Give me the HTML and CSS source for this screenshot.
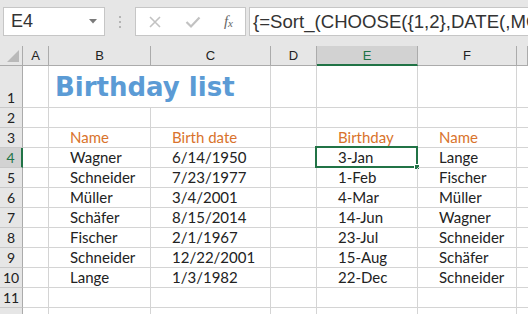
FILE: index.html
```html
<!DOCTYPE html>
<html lang="en">
<head>
  <meta charset="UTF-8">
  <title>Birthday list</title>
  <link rel="stylesheet" href="styles.css">
</head>
<body>

  <!-- Name box + formula bar -->
  <div class="toolbar">
    <div class="name-box">
      <span>E4</span>
      <svg class="drop" width="8" height="5" viewBox="0 0 8 5"><path d="M0 0H8L4 4.5Z" fill="#7a7a7a"/></svg>
    </div>
    <div class="grip"><i></i><i></i><i></i></div>
    <div class="fx-box">
      <svg width="14" height="14" viewBox="0 0 14 14"><path d="M2 2L12 12M12 2L2 12" stroke="#c2c2c2" stroke-width="1.6" fill="none"/></svg>
      <svg width="16" height="14" viewBox="0 0 16 14"><path d="M1.5 7L6 11.5L14.5 2.5" stroke="#c2c2c2" stroke-width="2.2" fill="none"/></svg>
      <span class="fx">f<sub>x</sub></span>
    </div>
    <div class="formula">{=Sort_(CHOOSE({1,2},DATE(,MONTH(C4:C10),DAY(C4:C10)),B4:B10),1)}</div>
  </div>

  <!-- Worksheet -->
  <div class="sheet">
    <div class="row head">
      <div class="corner"><span class="tri"></span></div>
      <div class="col">A</div><div class="col">B</div><div class="col">C</div><div class="col">D</div>
      <div class="col active">E</div><div class="col">F</div><div class="col"></div>
    </div>
    <div class="row tall">
      <div class="num">1</div><div class="c"></div>
      <div class="c span2 title">Birthday list</div>
      <div class="c"></div><div class="c"></div><div class="c"></div><div class="c"></div>
    </div>
    <div class="row">
      <div class="num">2</div><div class="c"></div><div class="c"></div><div class="c"></div><div class="c"></div><div class="c"></div><div class="c"></div><div class="c"></div>
    </div>
    <div class="row">
      <div class="num">3</div><div class="c"></div><div class="c th">Name</div><div class="c th">Birth date</div><div class="c"></div><div class="c th">Birthday</div><div class="c th">Name</div><div class="c"></div>
    </div>
    <div class="row">
      <div class="num active">4</div><div class="c"></div><div class="c">Wagner</div><div class="c">6/14/1950</div><div class="c"></div>
      <div class="c selected">3-Jan<span class="sel-frame"><span class="handle"></span></span></div>
      <div class="c">Lange</div><div class="c"></div>
    </div>
    <div class="row">
      <div class="num">5</div><div class="c"></div><div class="c">Schneider</div><div class="c">7/23/1977</div><div class="c"></div><div class="c">1-Feb</div><div class="c">Fischer</div><div class="c"></div>
    </div>
    <div class="row">
      <div class="num">6</div><div class="c"></div><div class="c">Müller</div><div class="c">3/4/2001</div><div class="c"></div><div class="c">4-Mar</div><div class="c">Müller</div><div class="c"></div>
    </div>
    <div class="row">
      <div class="num">7</div><div class="c"></div><div class="c">Schäfer</div><div class="c">8/15/2014</div><div class="c"></div><div class="c">14-Jun</div><div class="c">Wagner</div><div class="c"></div>
    </div>
    <div class="row">
      <div class="num">8</div><div class="c"></div><div class="c">Fischer</div><div class="c">2/1/1967</div><div class="c"></div><div class="c">23-Jul</div><div class="c">Schneider</div><div class="c"></div>
    </div>
    <div class="row">
      <div class="num">9</div><div class="c"></div><div class="c">Schneider</div><div class="c">12/22/2001</div><div class="c"></div><div class="c">15-Aug</div><div class="c">Schäfer</div><div class="c"></div>
    </div>
    <div class="row">
      <div class="num">10</div><div class="c"></div><div class="c">Lange</div><div class="c">1/3/1982</div><div class="c"></div><div class="c">22-Dec</div><div class="c">Schneider</div><div class="c"></div>
    </div>
    <div class="row">
      <div class="num">11</div><div class="c"></div><div class="c"></div><div class="c"></div><div class="c"></div><div class="c"></div><div class="c"></div><div class="c"></div>
    </div>
    <div class="row">
      <div class="num"></div><div class="c"></div><div class="c"></div><div class="c"></div><div class="c"></div><div class="c"></div><div class="c"></div><div class="c"></div>
    </div>
  </div>

</body>
</html>
```

FILE: styles.css
```css
* {
  margin: 0;
  padding: 0;
  box-sizing: border-box;
}
body {
  background-color: #e6e6e6;
  font-family: Lato, "Liberation Sans", sans-serif;
  color: #222;
  overflow: hidden;
}

/* Formula bar */
.toolbar {
  display: flex;
  align-items: center;
  height: 46px;
  padding: 0 0 3px 3px;
  white-space: nowrap;
}
.name-box {
  display: flex;
  align-items: center;
  justify-content: space-between;
  width: 102px;
  height: 29px;
  padding: 0 7px 0 7px;
  background-color: #fff;
  border: 1px solid #c6c6c6;
  font-family: "Liberation Sans", sans-serif;
  font-size: 18px;
  color: #333;
}
.grip {
  display: flex;
  flex-direction: column;
  gap: 3px;
  width: 30px;
  align-items: center;
}
.grip i {
  width: 2px;
  height: 2px;
  background-color: #b4b4b4;
}
.fx-box {
  display: flex;
  align-items: center;
  justify-content: space-between;
  width: 111px;
  height: 29px;
  padding: 0 12px 0 12px;
  background-color: #fff;
  border: 1px solid #c6c6c6;
}
.fx {
  font-family: "Liberation Serif", serif;
  font-style: italic;
  font-size: 15px;
  color: #666;
}
.fx sub {
  font-size: 11px;
  vertical-align: -1px;
}
.formula {
  flex: 1;
  height: 29px;
  margin-left: 3px;
  padding-left: 3px;
  line-height: 27px;
  overflow: hidden;
  background-color: #fff;
  border: 1px solid #c6c6c6;
  border-right: none;
  font-family: "Liberation Sans", sans-serif;
  font-size: 18.6px;
  color: #333;
}

/* Grid */
.sheet {
  background-color: #fff;
}
.row {
  display: grid;
  grid-template-columns: 23px 26px 102px 120px 46px 101px 99px 1fr;
  height: 20px;
}
.row.tall {
  height: 42px;
}
.row.head {
  background-color: #e6e6e6;
}
.corner {
  position: relative;
  border-right: 1px solid #ababab;
  border-bottom: 1px solid #ababab;
}
.tri {
  position: absolute;
  right: 3px;
  bottom: 3px;
  width: 0;
  height: 0;
  border-left: 12px solid transparent;
  border-bottom: 12px solid #b9b9b9;
}
.col {
  display: flex;
  align-items: center;
  justify-content: center;
  border-right: 1px solid #ababab;
  border-bottom: 1px solid #ababab;
  font-family: "Liberation Sans", sans-serif;
  font-size: 13px;
  color: #222;
}
.col.active {
  background-color: #d2d2d2;
  border-bottom: 2px solid #217346;
  color: #217346;
}
.num {
  display: flex;
  align-items: center;
  justify-content: center;
  background-color: #e6e6e6;
  border-right: 1px solid #ababab;
  border-bottom: 1px solid #c8c8c8;
  font-size: 14px;
  color: #222;
}
.tall .num {
  align-items: flex-end;
  padding-bottom: 1px;
}
.num.active {
  background-color: #d2d2d2;
  border-right: 2px solid #217346;
  color: #217346;
}
.c {
  position: relative;
  border-right: 1px solid #d4d4d4;
  border-bottom: 1px solid #d4d4d4;
  padding-left: 21px;
  font-size: 15px;
  line-height: 19px;
  white-space: nowrap;
}
.span2 {
  grid-column: span 2;
}
.title {
  padding-left: 6px;
  padding-top: 4px;
  font-family: "DejaVu Sans", sans-serif;
  font-weight: bold;
  font-size: 26px;
  line-height: 34px;
  color: #5b9bd5;
}
.th {
  color: #d9732c;
}

/* Active cell */
.sel-frame {
  position: absolute;
  left: -2px;
  top: -2px;
  right: -1px;
  bottom: -1px;
  border: 2px solid #217346;
}
.handle {
  position: absolute;
  right: -4px;
  bottom: -4px;
  width: 6px;
  height: 6px;
  background-color: #217346;
  border: 1px solid #fff;
}
```
